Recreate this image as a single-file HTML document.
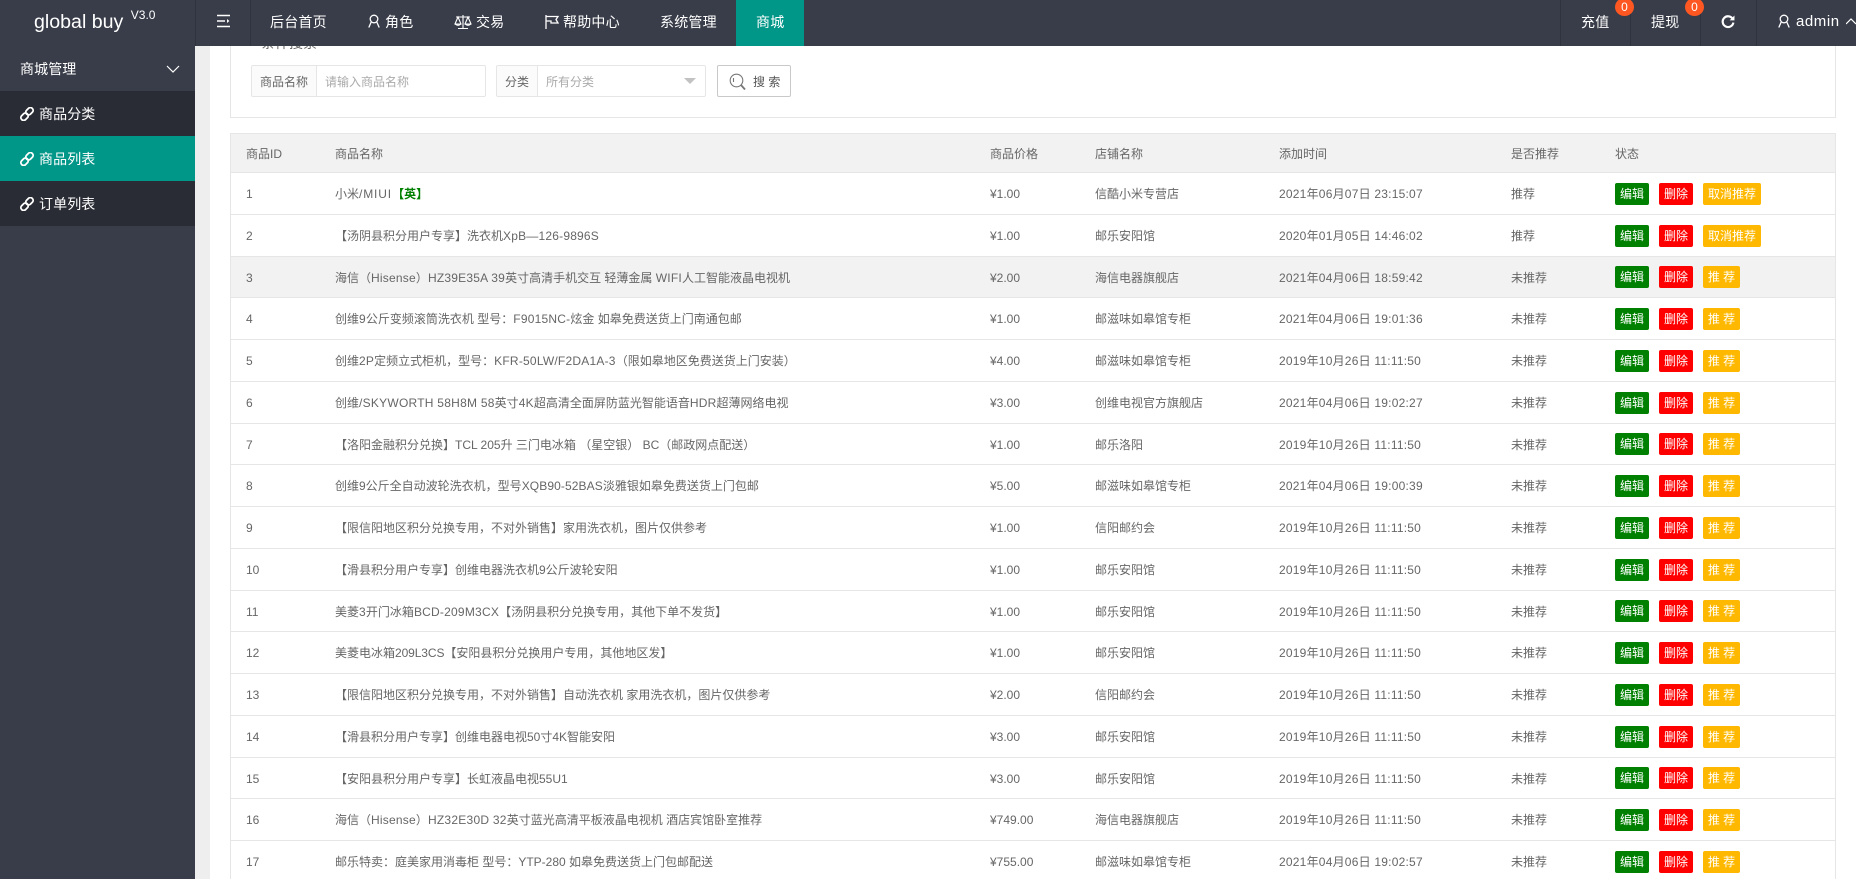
<!DOCTYPE html>
<html lang="zh-CN"><head><meta charset="utf-8"><title>global buy</title>
<style>
*{box-sizing:border-box}
html,body{margin:0;padding:0;width:1856px;height:879px;overflow:hidden;background:#fff}
body{font:14px "Liberation Sans","Noto Sans CJK SC",sans-serif;color:#666;position:relative}
.a{position:absolute;white-space:nowrap}
#hd{left:0;top:0;width:1856px;height:46px;background:#393d49;color:#fff;z-index:5}
#hd .t{position:absolute;top:0;line-height:44px;font-size:14px;color:#fff;white-space:nowrap;letter-spacing:.2px}
#hd .s{position:absolute;top:0;width:1px;height:46px;background:#2f333d}
#hd svg,.side svg{position:absolute;fill:none;stroke:#fff}
.badge{position:absolute;top:-2px;width:19px;height:18px;border-radius:50%;background:#ff5722;color:#fff;font-size:12px;line-height:18px;text-align:center}
.side{left:0;top:46px;width:195px;height:833px;background:#393d49;color:#fff}
.side div{position:absolute;left:0;width:195px;height:45px;line-height:47px;font-size:14px}
.side .c{background:#2a2c35}
.side span{position:absolute;left:39px;letter-spacing:.1px}
.panel{left:230px;top:20px;width:1606px;height:98px;border:1px solid #e6e6e6}
.leg{left:261px;top:33px;font-size:14px;color:#666;line-height:20px}
.lb{top:65px;height:32px;border:1px solid #e6e6e6;border-radius:2px 0 0 2px;background:#fbfbfb;font-size:12px;line-height:32px;text-align:center;color:#666}
.in{top:65px;height:32px;border:1px solid #e6e6e6;border-left:0;border-radius:0 2px 2px 0;background:#fff;font-size:12px;line-height:32px;color:#aaa;padding-left:8px}
.btn{left:717px;top:65px;width:74px;height:32px;border:1px solid #c9c9c9;border-radius:2px;background:#fff}
#tb{left:230px;top:133px;width:1606px;height:746px;border:1px solid #e6e6e6;border-bottom:0;font-size:12px;color:#666}
.r{position:relative;width:100%;border-bottom:1px solid #e6e6e6;line-height:43px}
.r span{position:absolute;top:0;white-space:nowrap;line-height:inherit}
.r i{font-style:normal;letter-spacing:.22px}
.r .i{left:15px}.r .n{left:104px}.r .p{left:759px}.r .m{left:864px}.r .d{left:1048px;letter-spacing:.22px}.r .f{left:1280px}
.r .e,.r .x,.r .y{top:10px;height:22px;line-height:22px;text-align:center;color:#fff;border-radius:2px}
.s41{height:41px;line-height:42px}.s42{height:42px}
.s41 .e,.s41 .x,.s41 .y{top:9px}
.r .e{left:1384px;width:34px;background:#008000}
.r .x{left:1428px;width:34px;background:#f00}
.r .y{left:1472px;width:37px;background:#ffb800}
.r .z{width:58px}
.h{background:#f2f2f2}
.u{background:#f2f2f2}
</style></head><body>

<div class="a" id="hd">
 <div class="t" style="left:34px;font-size:19.6px;letter-spacing:0">global buy <sup style="font-size:12px;line-height:0;position:relative;top:-3px;left:2px;vertical-align:6px">V3.0</sup></div>
 <div class="s" style="left:195px"></div><div class="s" style="left:250px"></div>
 <svg style="left:216px;top:14px" width="15" height="14" viewBox="0 0 15 14" stroke-width="1.6"><path d="M1 1.500h13M1 7h8M1 12.500h13"/><path d="M11 5l2.400 2-2.400 2z" fill="#fff" stroke="none"/></svg>
 <div class="t" style="left:270px">后台首页</div>
 <svg style="left:367px;top:14px" width="14" height="14" viewBox="0 0 14 14" stroke-width="1.3"><circle cx="7" cy="5" r="3.800"/><path d="M4.200 8 1.800 13.500M9.800 8l2.400 5.500"/></svg>
 <div class="t" style="left:385px">角色</div>
 <svg style="left:454px;top:14px" width="18" height="16" viewBox="0 0 18 16" stroke-width="1.100"><path d="M9 1v13M4 14.500h10M2 3h14M4 3 1 10h6zM14 3l-3 7h6z"/><path d="M1 10q3 2.500 6 0M11 10q3 2.500 6 0"/></svg>
 <div class="t" style="left:476px">交易</div>
 <svg style="left:545px;top:15px" width="15" height="14" viewBox="0 0 15 14" stroke-width="1.3"><path d="M1 0v14"/><path d="M1 1.500h12l-2 3 2 3.500H6V6H1"/></svg>
 <div class="t" style="left:563px">帮助中心</div>
 <div class="t" style="left:660px">系统管理</div>
 <div class="a" style="left:736px;top:0;width:68px;height:46px;background:#009688"></div>
 <div class="t" style="left:756px">商城</div>
 <div class="s" style="left:1560px"></div><div class="s" style="left:1630px"></div><div class="s" style="left:1700px"></div><div class="s" style="left:1756px"></div>
 <div class="t" style="left:1581px">充值</div><div class="badge" style="left:1615px">0</div>
 <div class="t" style="left:1651px">提现</div><div class="badge" style="left:1685px">0</div>
 <svg style="left:1721px;top:15px" width="14" height="14" viewBox="0 0 13 13" stroke-width="2"><path d="M10.800 3.500A5 5 0 1 0 11.500 7"/><path d="M12.500 .5v4.500H8z" fill="#fff" stroke="none"/></svg>
 <svg style="left:1777px;top:14px" width="14" height="14" viewBox="0 0 14 14" stroke-width="1.3"><circle cx="7" cy="5" r="3.800"/><path d="M4.200 8 1.800 13.500M9.800 8l2.400 5.500"/></svg>
 <div class="t" style="left:1796px;font-size:15px;letter-spacing:.55px">admin</div>
 <svg style="left:1846px;top:17px" width="10" height="8" viewBox="0 0 10 8" stroke-width="1.200"><path d="M0 7l5-5 5 5"/></svg>
</div>

<div class="a side">
 <div style="top:0"><span style="left:20px">商城管理</span>
  <svg style="left:166px;top:19px" width="14" height="9" viewBox="0 0 14 9" stroke-width="1.200"><path d="M1 1l6 6 6-6"/></svg></div>
 <div class="c" style="top:45px"><svg style="left:20px;top:16px" width="14" height="14" viewBox="0 0 14 14" stroke-width="1.800"><rect x=".5" y="7" width="8" height="5.500" rx="2.700" transform="rotate(-45 4.500 9.700)"/><rect x="5.500" y="1.500" width="8" height="5.500" rx="2.700" transform="rotate(-45 9.500 4.300)"/></svg><span>商品分类</span></div>
 <div style="top:90px;background:#009688"><svg style="left:20px;top:16px" width="14" height="14" viewBox="0 0 14 14" stroke-width="1.800"><rect x=".5" y="7" width="8" height="5.500" rx="2.700" transform="rotate(-45 4.500 9.700)"/><rect x="5.500" y="1.500" width="8" height="5.500" rx="2.700" transform="rotate(-45 9.500 4.300)"/></svg><span>商品列表</span></div>
 <div class="c" style="top:135px"><svg style="left:20px;top:16px" width="14" height="14" viewBox="0 0 14 14" stroke-width="1.800"><rect x=".5" y="7" width="8" height="5.500" rx="2.700" transform="rotate(-45 4.500 9.700)"/><rect x="5.500" y="1.500" width="8" height="5.500" rx="2.700" transform="rotate(-45 9.500 4.300)"/></svg><span>订单列表</span></div>
</div>
<div class="a" style="left:195px;top:46px;width:15px;height:833px;background:#eee"></div>

<div class="a panel"></div>
<div class="a leg">条件搜索</div>
<div class="a lb" style="left:251px;width:66px">商品名称</div>
<div class="a in" style="left:317px;width:169px">请输入商品名称</div>
<div class="a lb" style="left:496px;width:42px">分类</div>
<div class="a in" style="left:538px;width:168px">所有分类</div>
<div class="a" style="left:684px;top:78px;width:0;height:0;border:6px solid transparent;border-top:6px solid #c2c2c2;border-bottom:0"></div>
<div class="a btn">
 <svg class="a" style="left:11px;top:7px" width="18" height="18" viewBox="0 0 18 18" fill="none" stroke="#777" stroke-width="1.100"><circle cx="7.500" cy="7.500" r="6.300"/><path d="M4.500 5v4"/><path d="M12 12l4 4.500" stroke-width="1.800"/></svg>
 <span class="a" style="left:35px;top:0;line-height:33px;font-size:12px;color:#555">搜 索</span>
</div>

<div class="a" id="tb">
<div class="r h" style="height:39px;line-height:40px"><span class="i">商品ID</span><span class="n">商品名称</span><span class="p">商品价格</span><span class="m">店铺名称</span><span class="d" style="letter-spacing:0">添加时间</span><span class="f">是否推荐</span><span style="left:1384px">状态</span></div>
<div class="r s42"><span class="i">1</span><span class="n">小米<i style="letter-spacing:.85px">/MIUI </i><b style="color:#008000;font-weight:700;margin-left:-4px">【英】</b></span><span class="p">¥1.00</span><span class="m">信酷小米专营店</span><span class="d">2021年06月07日 23:15:07</span><span class="f">推荐</span><span class="e">编辑</span><span class="x">删除</span><span class="y z">取消推荐</span></div>
<div class="r s42"><span class="i">2</span><span class="n">【汤阴县积分用户专享】洗衣机<i style="letter-spacing:.2px">XpB—126-9896S</i></span><span class="p">¥1.00</span><span class="m">邮乐安阳馆</span><span class="d">2020年01月05日 14:46:02</span><span class="f">推荐</span><span class="e">编辑</span><span class="x">删除</span><span class="y z">取消推荐</span></div>
<div class="r u s41"><span class="i">3</span><span class="n">海信（<i>Hisense</i>）<i>HZ39E35A 39</i>英寸高清手机交互 轻薄金属 <i>WIFI</i>人工智能液晶电视机</span><span class="p">¥2.00</span><span class="m">海信电器旗舰店</span><span class="d">2021年04月06日 18:59:42</span><span class="f">未推荐</span><span class="e">编辑</span><span class="x">删除</span><span class="y">推 荐</span></div>
<div class="r s42"><span class="i">4</span><span class="n">创维<i>9</i>公斤变频滚筒洗衣机 型号：<i>F9015NC-</i>炫金 如皋免费送货上门南通包邮</span><span class="p">¥1.00</span><span class="m">邮滋味如皋馆专柜</span><span class="d">2021年04月06日 19:01:36</span><span class="f">未推荐</span><span class="e">编辑</span><span class="x">删除</span><span class="y">推 荐</span></div>
<div class="r s42"><span class="i">5</span><span class="n">创维<i>2P</i>定频立式柜机，型号：<i>KFR-50LW/F2DA1A-3</i>（限如皋地区免费送货上门安装）</span><span class="p">¥4.00</span><span class="m">邮滋味如皋馆专柜</span><span class="d">2019年10月26日 11:11:50</span><span class="f">未推荐</span><span class="e">编辑</span><span class="x">删除</span><span class="y">推 荐</span></div>
<div class="r s42"><span class="i">6</span><span class="n">创维<i style="letter-spacing:.25px">/SKYWORTH 58H8M 58</i>英寸<i>4K</i>超高清全面屏防蓝光智能语音<i>HDR</i>超薄网络电视</span><span class="p">¥3.00</span><span class="m">创维电视官方旗舰店</span><span class="d">2021年04月06日 19:02:27</span><span class="f">未推荐</span><span class="e">编辑</span><span class="x">删除</span><span class="y">推 荐</span></div>
<div class="r s41"><span class="i">7</span><span class="n">【洛阳金融积分兑换】TCL 205升 三门电冰箱 （星空银） BC（邮政网点配送）</span><span class="p">¥1.00</span><span class="m">邮乐洛阳</span><span class="d">2019年10月26日 11:11:50</span><span class="f">未推荐</span><span class="e">编辑</span><span class="x">删除</span><span class="y">推 荐</span></div>
<div class="r s42"><span class="i">8</span><span class="n">创维9公斤全自动波轮洗衣机，型号<i style="letter-spacing:.1px">XQB90-52BAS</i>淡雅银如皋免费送货上门包邮</span><span class="p">¥5.00</span><span class="m">邮滋味如皋馆专柜</span><span class="d">2021年04月06日 19:00:39</span><span class="f">未推荐</span><span class="e">编辑</span><span class="x">删除</span><span class="y">推 荐</span></div>
<div class="r s42"><span class="i">9</span><span class="n">【限信阳地区积分兑换专用，不对外销售】家用洗衣机，图片仅供参考</span><span class="p">¥1.00</span><span class="m">信阳邮约会</span><span class="d">2019年10月26日 11:11:50</span><span class="f">未推荐</span><span class="e">编辑</span><span class="x">删除</span><span class="y">推 荐</span></div>
<div class="r s42"><span class="i">10</span><span class="n">【滑县积分用户专享】创维电器洗衣机9公斤波轮安阳</span><span class="p">¥1.00</span><span class="m">邮乐安阳馆</span><span class="d">2019年10月26日 11:11:50</span><span class="f">未推荐</span><span class="e">编辑</span><span class="x">删除</span><span class="y">推 荐</span></div>
<div class="r s41"><span class="i">11</span><span class="n">美菱<i>3</i>开门冰箱<i>BCD-209M3CX</i>【汤阴县积分兑换专用，其他下单不发货】</span><span class="p">¥1.00</span><span class="m">邮乐安阳馆</span><span class="d">2019年10月26日 11:11:50</span><span class="f">未推荐</span><span class="e">编辑</span><span class="x">删除</span><span class="y">推 荐</span></div>
<div class="r s42"><span class="i">12</span><span class="n">美菱电冰箱<i style="letter-spacing:-.1px">209L3CS</i>【安阳县积分兑换用户专用，其他地区发】</span><span class="p">¥1.00</span><span class="m">邮乐安阳馆</span><span class="d">2019年10月26日 11:11:50</span><span class="f">未推荐</span><span class="e">编辑</span><span class="x">删除</span><span class="y">推 荐</span></div>
<div class="r s42"><span class="i">13</span><span class="n">【限信阳地区积分兑换专用，不对外销售】自动洗衣机 家用洗衣机，图片仅供参考</span><span class="p">¥2.00</span><span class="m">信阳邮约会</span><span class="d">2019年10月26日 11:11:50</span><span class="f">未推荐</span><span class="e">编辑</span><span class="x">删除</span><span class="y">推 荐</span></div>
<div class="r s42"><span class="i">14</span><span class="n">【滑县积分用户专享】创维电器电视50寸4K智能安阳</span><span class="p">¥3.00</span><span class="m">邮乐安阳馆</span><span class="d">2019年10月26日 11:11:50</span><span class="f">未推荐</span><span class="e">编辑</span><span class="x">删除</span><span class="y">推 荐</span></div>
<div class="r s41"><span class="i">15</span><span class="n">【安阳县积分用户专享】长虹液晶电视55U1</span><span class="p">¥3.00</span><span class="m">邮乐安阳馆</span><span class="d">2019年10月26日 11:11:50</span><span class="f">未推荐</span><span class="e">编辑</span><span class="x">删除</span><span class="y">推 荐</span></div>
<div class="r s42"><span class="i">16</span><span class="n">海信（<i>Hisense</i>）<i style="letter-spacing:.25px">HZ32E30D 32</i>英寸蓝光高清平板液晶电视机 酒店宾馆卧室推荐</span><span class="p">¥749.00</span><span class="m">海信电器旗舰店</span><span class="d">2019年10月26日 11:11:50</span><span class="f">未推荐</span><span class="e">编辑</span><span class="x">删除</span><span class="y">推 荐</span></div>
<div class="r s42" style="border-bottom:0"><span class="i">17</span><span class="n">邮乐特卖：庭美家用消毒柜 型号：YTP-280 如皋免费送货上门包邮配送</span><span class="p">¥755.00</span><span class="m">邮滋味如皋馆专柜</span><span class="d">2021年04月06日 19:02:57</span><span class="f">未推荐</span><span class="e">编辑</span><span class="x">删除</span><span class="y">推 荐</span></div>
</div>
</body></html>
